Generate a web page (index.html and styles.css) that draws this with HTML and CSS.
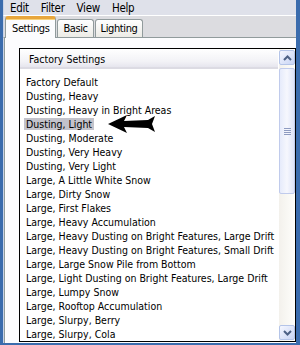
FILE: index.html
```html
<!DOCTYPE html>
<html lang="en">

<head>
    <title>Snow Settings</title>
    <link rel="stylesheet" href="styles.css">
</head>

<body>
    <div class="window">
        <div class="menubar">
            <span class="menu-item">Edit</span>
            <span class="menu-item">Filter</span>
            <span class="menu-item">View</span>
            <span class="menu-item">Help</span>
        </div>

        <div class="tabstrip">
            <div class="tab active">Settings</div>
            <div class="tab">Basic</div>
            <div class="tab">Lighting</div>
        </div>

        <div class="panel">
            <div class="listbox">
                <div class="list-main">
                    <div class="list-header">Factory Settings</div>
                    <div class="list-rows">
                        <div class="row"><span>Factory Default</span></div>
                        <div class="row"><span>Dusting, Heavy</span></div>
                        <div class="row"><span>Dusting, Heavy in Bright Areas</span></div>
                        <div class="row selected"><span>Dusting, Light</span>
                            <svg class="pointer" width="48" height="18" viewBox="0 0 48 18">
                                <polygon points="0,9 19,0 16,6 40,5 47,1 44,9 47,17 40,13 16,12 19,18" fill="#000" />
                            </svg>
                        </div>
                        <div class="row"><span>Dusting, Moderate</span></div>
                        <div class="row"><span>Dusting, Very Heavy</span></div>
                        <div class="row"><span>Dusting, Very Light</span></div>
                        <div class="row"><span>Large, A Little White Snow</span></div>
                        <div class="row"><span>Large, Dirty Snow</span></div>
                        <div class="row"><span>Large, First Flakes</span></div>
                        <div class="row"><span>Large, Heavy Accumulation</span></div>
                        <div class="row"><span>Large, Heavy Dusting on Bright Features, Large Drift</span></div>
                        <div class="row"><span>Large, Heavy Dusting on Bright Features, Small Drift</span></div>
                        <div class="row"><span>Large, Large Snow Pile from Bottom</span></div>
                        <div class="row"><span>Large, Light Dusting on Bright Features, Large Drift</span></div>
                        <div class="row"><span>Large, Lumpy Snow</span></div>
                        <div class="row"><span>Large, Rooftop Accumulation</span></div>
                        <div class="row"><span>Large, Slurpy, Berry</span></div>
                        <div class="row"><span>Large, Slurpy, Cola</span></div>
                    </div>
                </div>

                <div class="scrollbar">
                    <div class="scroll-btn">
                        <svg width="9" height="6" viewBox="0 0 9 6"><polyline points="1,5 4.5,1.5 8,5" fill="none" stroke="#4d6185" stroke-width="2" /></svg>
                    </div>
                    <div class="scroll-track">
                        <div class="scroll-thumb">
                            <div class="grip"></div>
                            <div class="grip"></div>
                            <div class="grip"></div>
                            <div class="grip"></div>
                        </div>
                    </div>
                    <div class="scroll-btn">
                        <svg width="9" height="6" viewBox="0 0 9 6"><polyline points="1,1 4.5,4.5 8,1" fill="none" stroke="#4d6185" stroke-width="2" /></svg>
                    </div>
                </div>
            </div>
        </div>
    </div>
</body>

</html>
```

FILE: styles.css
```css
body {
    margin: 0;
    padding: 0;
    font-family: "DejaVu Sans", sans-serif;
    font-stretch: condensed;
    font-size: 10.5px;
    color: #000;
}

.window {
    width: 300px;
    height: 345px;
    box-sizing: border-box;
    background-color: #3b6cad;
    padding: 0 4px 3px 3px;
    display: flex;
    flex-direction: column;
    overflow: hidden;
}

.menubar {
    height: 21px;
    background-color: #dfe1ea;
    border-bottom: 1px solid #ffffff;
    border-left: 1px solid #c9d3e6;
    display: flex;
    align-items: center;
    padding-left: 6px;
    font-size: 11.5px;
    letter-spacing: -0.3px;
}

.menu-item {
    margin-right: 12px;
    padding-top: 1px;
}

.tabstrip {
    height: 22px;
    background-color: #dcdce0;
    border-left: 1px solid #c9d3e6;
    display: flex;
    align-items: flex-end;
    padding-left: 1px;
    position: relative;
    z-index: 1;
}

.tab {
    height: 17px;
    padding: 0 5px;
    margin-right: 1px;
    border: 1px solid #919b9c;
    border-bottom: none;
    border-radius: 3px 3px 0 0;
    background: linear-gradient(#ffffff, #ecebe6);
    font-size: 11px;
    letter-spacing: -0.4px;
    line-height: 18px;
    color: #000;
}

.tab.active {
    padding: 0 6px;
    margin-bottom: -1px;
    background: #fcfcfe;
    border-top: 3px solid #e8a63c;
    box-shadow: inset 0 1px 0 #f8d27b;
    line-height: 19px;
    height: 19px;
}

.panel {
    flex: 1;
    background-color: #fcfcfe;
    border-left: 1px solid #c9d3e6;
    border-top: 1px solid #919b9c;
    box-shadow: inset 1px 0 0 #919b9c, inset 2px 0 0 #ffffff;
    padding: 10px 0 0 15px;
    display: flex;
}

.listbox {
    flex: 1;
    border: 1px solid #000;
    background: #ffffff;
    display: flex;
    overflow: hidden;
    margin-bottom: 1px;
}

.list-main {
    flex: 1;
    overflow: hidden;
}

.list-header {
    height: 18px;
    line-height: 20px;
    padding-left: 9px;
    background: linear-gradient(#ffffff, #f2f2f6 70%, #e6e5ee);
    border-bottom: 2px solid #dcdbe3;
}

.list-rows {
    padding-top: 6px;
}

.row {
    height: 14px;
    line-height: 14px;
    padding-left: 4px;
    white-space: nowrap;
    position: relative;
}

.row span {
    padding: 0 2px 0 2px;
}

.row.selected span {
    background-color: #c3c3cb;
}

.pointer {
    position: absolute;
    left: 88px;
    top: -2px;
}

.scrollbar {
    width: 16px;
    display: flex;
    flex-direction: column;
    background: linear-gradient(90deg, #f3f1ec, #fefefb);
    border-left: 1px solid #ffffff;
}

.scroll-btn {
    height: 15px;
    box-sizing: border-box;
    border: 1px solid #b4c4e8;
    border-radius: 2px;
    background: linear-gradient(135deg, #f5f7ff, #c8d4f4);
    display: flex;
    align-items: center;
    justify-content: center;
    margin: 1px 0;
}

.scroll-track {
    flex: 1;
    padding-top: 2px;
}

.scroll-thumb {
    height: 126px;
    box-sizing: border-box;
    border: 1px solid #c0cbec;
    border-radius: 2px;
    background: linear-gradient(90deg, #e6ebfb, #f6f7fd 50%, #dde3f8);
    display: flex;
    flex-direction: column;
    justify-content: center;
    align-items: center;
    gap: 1px;
}

.grip {
    width: 7px;
    height: 1px;
    background-color: #8e9bc1;
}
```
